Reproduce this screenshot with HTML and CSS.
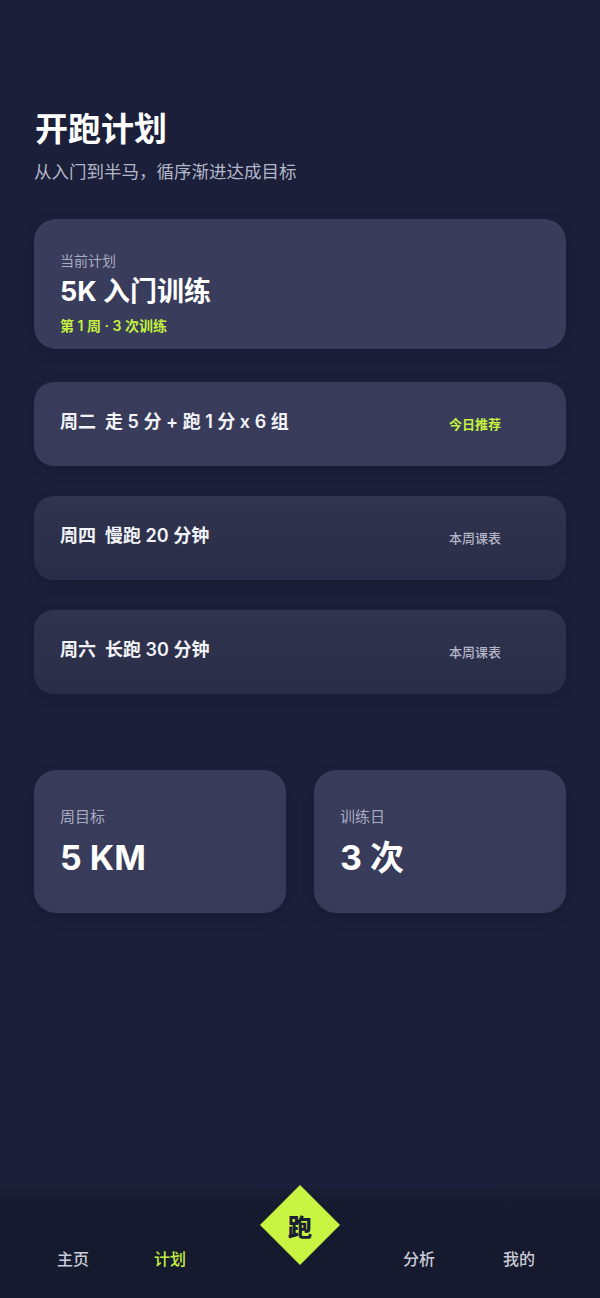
FILE: index.html
```html
<!DOCTYPE html>
<html lang="zh-CN">
<head>
  <meta charset="UTF-8">
  <meta name="viewport" content="width=device-width, initial-scale=1.0">
  <title>开跑计划</title>
  <link rel="stylesheet" href="styles.css">
</head>
<body>
  <div class="page">
    <h1 class="title">开跑计划</h1>
    <p class="subtitle">从入门到半马，循序渐进达成目标</p>

    <div class="plan-card">
      <div class="plan-label">当前计划</div>
      <div class="plan-name">5K 入门训练</div>
      <div class="plan-meta">第 1 周 · 3 次训练</div>
    </div>

    <div class="sessions">
      <div class="session today">
        <span class="session-text">周二&nbsp; 走 5 分 + 跑 1 分 x 6 组</span>
        <span class="session-tag">今日推荐</span>
      </div>
      <div class="session">
        <span class="session-text">周四&nbsp; 慢跑 20 分钟</span>
        <span class="session-tag">本周课表</span>
      </div>
      <div class="session">
        <span class="session-text">周六&nbsp; 长跑 30 分钟</span>
        <span class="session-tag">本周课表</span>
      </div>
    </div>

    <div class="stats">
      <div class="stat-card">
        <div class="stat-label">周目标</div>
        <div class="stat-value">5 KM</div>
      </div>
      <div class="stat-card">
        <div class="stat-label">训练日</div>
        <div class="stat-value">3 次</div>
      </div>
    </div>
  </div>

  <nav class="tabbar">
    <a class="tab">主页</a>
    <a class="tab active">计划</a>
    <a class="run-btn"><span>跑</span></a>
    <a class="tab">分析</a>
    <a class="tab">我的</a>
  </nav>
</body>
</html>
```

FILE: styles.css
```css
html, body {
  height: 100%;
}
body {
  margin: 0;
  font-family: 'Inter', 'Noto Sans CJK SC', sans-serif;
  background: #1b1f3a;
  color: #fff;
  display: flex;
  flex-direction: column;
}
.page {
  flex: 1;
  padding: 110px 34px 0;
}
.title {
  margin: 0;
  padding-left: 1px;
  font-size: 33px;
  line-height: 38px;
  font-weight: 700;
}
.subtitle {
  margin: 12px 0 0;
  font-size: 17.5px;
  line-height: 24px;
  color: #b4b7c8;
}
.plan-card {
  margin-top: 35px;
  height: 130px;
  box-sizing: border-box;
  padding: 32px 26px 0;
  background: #393c5b;
  border-radius: 22px;
  box-shadow: 0 4px 14px rgba(0, 0, 0, 0.15);
}
.plan-label {
  font-size: 14px;
  line-height: 20px;
  color: #a9acc0;
}
.plan-name {
  margin-top: 4px;
  font-size: 27px;
  line-height: 34px;
  font-weight: 700;
}
.plan-meta {
  margin-top: 7px;
  font-size: 14px;
  line-height: 20px;
  font-weight: 600;
  color: #c5f03f;
}
.sessions {
  margin-top: 33px;
  display: flex;
  flex-direction: column;
  gap: 30px;
}
.session {
  height: 84px;
  box-sizing: border-box;
  padding: 0 65px 0 26px;
  display: flex;
  justify-content: space-between;
  align-items: center;
  border-radius: 20px;
  background: linear-gradient(to bottom, #31344f, #2a2d48);
  box-shadow: 0 4px 14px rgba(0, 0, 0, 0.12);
}
.session.today {
  background: #383b5a;
}
.session-text {
  font-size: 18px;
  line-height: 24px;
  font-weight: 600;
  color: #f2f3f7;
  margin-top: -4px;
}
.session-tag {
  font-size: 13px;
  line-height: 18px;
  font-weight: 500;
  color: #b3b5c6;
}
.today .session-tag {
  color: #c5f03f;
  font-weight: 600;
}
.stats {
  margin-top: 76px;
  display: flex;
  gap: 28px;
}
.stat-card {
  flex: 1;
  height: 143px;
  box-sizing: border-box;
  padding: 37px 26px 0;
  background: #383b5a;
  border-radius: 22px;
  box-shadow: 0 4px 14px rgba(0, 0, 0, 0.15);
}
.stat-label {
  font-size: 15px;
  line-height: 20px;
  color: #a9acc0;
}
.stat-value {
  margin-top: 11px;
  font-size: 34px;
  line-height: 40px;
  font-weight: 700;
}
.tabbar {
  height: 111px;
  box-sizing: border-box;
  padding: 0 65px 0 57px;
  display: flex;
  justify-content: space-between;
  align-items: flex-start;
  background: linear-gradient(to bottom, #1a1e36, #161a2e 20%);
}
.tab {
  margin-top: 61px;
  font-size: 16px;
  line-height: 22px;
  font-weight: 500;
  color: #c9cbd8;
}
.tab.active {
  color: #c5f03f;
  margin-left: -3px;
}
.run-btn {
  width: 80px;
  height: 80px;
  margin: -2px -5px 0 6px;
  display: flex;
  align-items: center;
  justify-content: center;
  background: #c8f542;
  clip-path: polygon(50% 0, 100% 50%, 50% 100%, 0 50%);
}
.run-btn span {
  font-size: 24px;
  font-weight: 900;
  color: #1b1f34;
}
```
